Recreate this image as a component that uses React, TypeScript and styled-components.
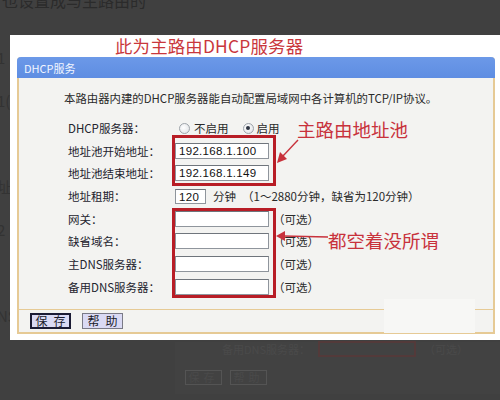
import React from 'react'
import styled, { createGlobalStyle } from 'styled-components'

const GlobalStyle = createGlobalStyle`
  html, body { margin: 0; padding: 0; background: #404040; }
  body { font-family: "Noto Sans CJK SC", "Noto Sans", sans-serif; }
`

const CJK = `"Noto Sans CJK SC", "Noto Sans", sans-serif`
const LATIN = `"Liberation Sans", Arial, "Noto Sans CJK SC", sans-serif`

const Page = styled.div`
  width: 500px;
  height: 400px;
  overflow: hidden;
  background: #404040;
  display: flex;
  flex-direction: column;
`

const GhostTop = styled.div`
  height: 35px;
  overflow: hidden;
  font-family: ${CJK};
  font-size: 16px;
  line-height: 18px;
  color: #2b2b2b;
  padding-left: 2px;
  & > span { display: block; margin-top: -9px; }
`

const Middle = styled.div`
  display: flex;
  height: 305px;
`

const GhostStrip = styled.div`
  width: 10px;
  overflow: hidden;
  font-family: ${CJK};
  font-size: 15px;
  color: #333;
  display: flex;
  flex-direction: column;
  gap: 22px;
  padding-top: 12px;
  & > span { margin-left: -3px; white-space: nowrap; }
`

const Shot = styled.div`
  position: relative;
  width: 490px;
  height: 305px;
  background: #ffffff;
`

const Title = styled.div`
  height: 22px;
  line-height: 22px;
  padding-left: 105px;
  font-family: ${CJK};
  font-size: 17.4px;
  color: #c9373c;
  letter-spacing: 0.2px;
`

const Panel = styled.div`
  margin-left: 7px;
  width: 478px;
  height: 277px;
  box-sizing: border-box;
  display: flex;
  flex-direction: column;
  background: #f3f3f1;
  border: 2px solid #e6ca95;
  border-top: none;
  border-radius: 4px 4px 0 0;
`

const Header = styled.div`
  height: 21px;
  margin: 0 -2px;
  border-radius: 4px 4px 0 0;
  background: linear-gradient(#6c99e8, #5e8de2);
  color: #f2f6ff;
  font-family: ${CJK};
  font-size: 11px;
  line-height: 22px;
  padding-left: 7px;
`

const Body = styled.div`
  padding: 10px 0 0 49px;
  flex: 1;
`

const Intro = styled.div`
  margin-left: -4px;
  height: 20px;
  line-height: 20px;
  margin-bottom: 8.7px;
  font-family: ${CJK};
  font-size: 11.4px;
  color: #2a2a2a;
`

const Form = styled.div`
  display: grid;
  grid-template-columns: 107px 1fr;
  grid-auto-rows: 22.7px;
  align-items: center;
`

const Label = styled.div`
  font-family: ${CJK};
  font-size: 11.5px;
  color: #23232e;
  white-space: nowrap;
`

const Field = styled.div`
  display: flex;
  align-items: center;
  font-family: ${CJK};
  font-size: 11.5px;
  color: #2a2a2a;
  white-space: nowrap;
`

const Input = styled.div<{ $w?: number; $h?: number }>`
  width: ${({ $w }) => $w ?? 94}px;
  height: ${({ $h }) => $h ?? 16}px;
  box-sizing: border-box;
  background: #fff;
  border: 1px solid #8f959c;
  border-top-color: #6f757c;
  font-family: ${LATIN};
  font-size: 11.5px;
  line-height: 14px;
  padding-left: 3px;
  color: #111;
  letter-spacing: 0.3px;
`

const Radio = styled.span<{ $checked?: boolean }>`
  width: 11px;
  height: 11px;
  box-sizing: border-box;
  border-radius: 50%;
  border: 1px solid #9ea4aa;
  background: radial-gradient(circle at 40% 40%, #ffffff, #dcdfe3);
  position: relative;
  margin: ${({ $checked }) => ($checked ? '0 3px 0 14px' : '0 4px 0 4px')};
  &::after {
    content: '';
    display: ${({ $checked }) => ($checked ? 'block' : 'none')};
    position: absolute;
    left: 2.5px;
    top: 2.5px;
    width: 4px;
    height: 4px;
    border-radius: 50%;
    background: #2d3442;
  }
`

const Note = styled.span<{ $gap?: number }>`
  margin-left: ${({ $gap }) => $gap ?? 4}px;
`

const Divider = styled.div`
  height: 1px;
  background: #e6ca95;
`

const Footer = styled.div`
  height: 22px;
  display: flex;
  align-items: center;
  gap: 11px;
  padding-left: 11px;
`

const Button = styled.div<{ $focused?: boolean }>`
  width: 41px;
  height: 16px;
  box-sizing: border-box;
  border: ${({ $focused }) => ($focused ? '2px solid #1c1c34' : '1px solid #7a7a86')};
  background: #dadaf4;
  font-family: ${CJK};
  font-size: 12px;
  line-height: ${({ $focused }) => ($focused ? 12 : 14)}px;
  text-align: center;
  white-space: nowrap;
  overflow: hidden;
  color: #1a1a2a;
  & > span + span { margin-left: 6px; }
`

const Patch = styled.div`
  position: absolute;
  left: 374px;
  top: 264px;
  width: 91px;
  height: 34px;
  background: #f7f7f5;
`

const RedBox = styled.div<{ $top: number; $height: number }>`
  position: absolute;
  left: 162px;
  top: ${({ $top }) => $top}px;
  width: 104px;
  height: ${({ $height }) => $height}px;
  box-sizing: border-box;
  border: 3px solid #b81d26;
`

const Callout = styled.div<{ $left: number; $top: number }>`
  position: absolute;
  left: ${({ $left }) => $left}px;
  top: ${({ $top }) => $top}px;
  font-family: ${CJK};
  font-size: 18.5px;
  line-height: 22px;
  color: #c8323c;
  white-space: nowrap;
`

const Arrows = styled.svg`
  position: absolute;
  left: 0;
  top: 0;
  pointer-events: none;
`

const GhostBottom = styled.div`
  flex: 1;
  padding: 2px 0 0 175px;
  font-family: ${CJK};
  font-size: 11px;
  color: #4a4a4a;
`

const GhostPanel = styled.div`
  background: #424242;
  height: 52px;
  padding-left: 10px;
  display: flex;
  flex-direction: column;
  gap: 14px;
`

const GhostRow = styled.div`
  display: flex;
  align-items: center;
  gap: 8px;
  height: 14px;
`

const GhostLabel = styled.span`
  width: 125px;
  text-align: right;
`

const GhostInput = styled.span`
  width: 94px;
  height: 12px;
  border: 2px solid #533a3a;
`

const GhostButton = styled.span`
  width: 35px;
  height: 13px;
  border: 1px solid #545454;
  text-align: center;
  line-height: 13px;
  letter-spacing: 4px;
`

const optionalRows = ['网关：', '缺省域名：', '主DNS服务器：', '备用DNS服务器：']

export default function App() {
  return (
    <Page>
      <GlobalStyle />
      <GhostTop><span>也设置成与主路由的</span></GhostTop>
      <Middle>
        <GhostStrip>
          <span>1</span>
          <span>1(</span>
          <span>&nbsp;</span>
          <span>址</span>
          <span>2</span>
          <span>&nbsp;</span>
          <span>NS</span>
          <span>W</span>
        </GhostStrip>
        <Shot>
          <Title>此为主路由DHCP服务器</Title>
          <Panel>
            <Header>DHCP服务</Header>
            <Body>
              <Intro>本路由器内建的DHCP服务器能自动配置局域网中各计算机的TCP/IP协议。</Intro>
              <Form>
                <Label>DHCP服务器：</Label>
                <Field>
                  <Radio />不启用
                  <Radio $checked />启用
                </Field>
                <Label>地址池开始地址：</Label>
                <Field><Input>192.168.1.100</Input></Field>
                <Label>地址池结束地址：</Label>
                <Field><Input>192.168.1.149</Input></Field>
                <Label>地址租期：</Label>
                <Field>
                  <Input $w={31} $h={15}>120</Input>
                  <Note $gap={7}>分钟</Note>
                  <Note $gap={6}>（1～2880分钟，缺省为120分钟）</Note>
                </Field>
                {optionalRows.map((label) => (
                  <React.Fragment key={label}>
                    <Label>{label}</Label>
                    <Field>
                      <Input />
                      <Note $gap={4}>（可选）</Note>
                    </Field>
                  </React.Fragment>
                ))}
              </Form>
            </Body>
            <Divider />
            <Footer>
              <Button $focused><span>保</span><span>存</span></Button>
              <Button><span>帮</span><span>助</span></Button>
            </Footer>
          </Panel>
          <Patch />
          <RedBox $top={100} $height={51} />
          <RedBox $top={173} $height={90} />
          <Callout $left={287} $top={83}>主路由地址池</Callout>
          <Callout $left={318} $top={194}>都空着没所谓</Callout>
          <Arrows width="490" height="305" viewBox="0 0 490 305">
            <line x1="288" y1="105" x2="272" y2="122" stroke="#c8323c" strokeWidth="1.4" />
            <polygon points="267,128 270,117 277,124" fill="#c8323c" />
            <line x1="318" y1="202" x2="273" y2="201" stroke="#c8323c" strokeWidth="1.6" />
            <polygon points="266,201 275,196 275,206" fill="#c8323c" />
          </Arrows>
        </Shot>
      </Middle>
      <GhostBottom>
        <GhostPanel>
          <GhostRow>
            <GhostLabel>备用DNS服务器：</GhostLabel>
            <GhostInput />
            <span>（可选）</span>
          </GhostRow>
          <GhostRow>
            <GhostButton>保存</GhostButton>
            <GhostButton>帮助</GhostButton>
          </GhostRow>
        </GhostPanel>
      </GhostBottom>
    </Page>
  )
}
